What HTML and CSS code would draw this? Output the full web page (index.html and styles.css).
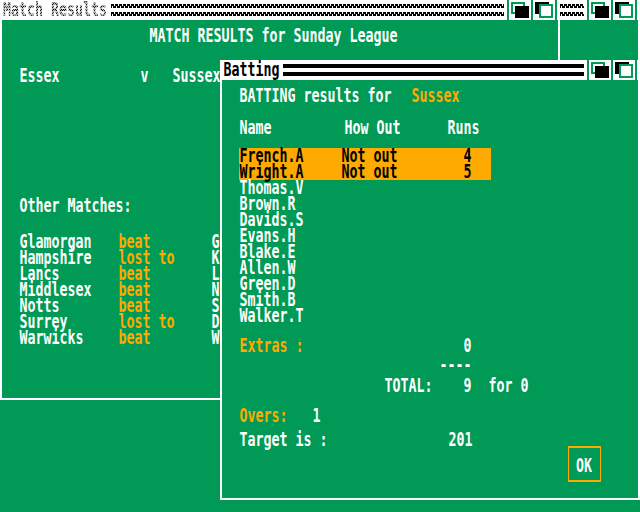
FILE: index.html
```html
<!DOCTYPE html>
<html lang="en">
<head>
<meta charset="utf-8">
<title>Match Results</title>
<link rel="stylesheet" href="styles.css">
</head>
<body>
<svg width="0" height="0" class="defs" aria-hidden="true">
  <symbol id="gadgets" viewBox="0 0 50 20">
    <path fill="#fff" d="M0 0h50v20H0z"/>
    <path fill="#095" d="M0 0h2v20H0zM24 0h2v20h-2zM48 0h2v20h-2z"/>
    <path fill="#095" fill-rule="evenodd" d="M4 2h14v12H4zM6 4v8h10V4z"/>
    <path fill="#000" d="M8 6h14v12H8zM28 2h14v12H28z"/>
    <path fill="#095" d="M32 4h14v14H32z"/>
    <path fill="#fff" d="M34 6h10v10H34z"/>
  </symbol>
</svg>
<main class="desktop">
  <section class="window side">
    <header class="bar"><i class="stripes wavy"></i><svg class="gadgets" width="50" height="20"><use href="#gadgets"/></svg></header>
  </section>

  <section class="window results">
    <header class="bar inactive"><h1>Match Results</h1><i class="stripes wavy"></i><svg class="gadgets" width="50" height="20"><use href="#gadgets"/></svg></header>
    <div class="body">
      <div class="row heading"><span>MATCH RESULTS for Sunday League</span></div>
      <div class="row fixture"><span>Essex</span><span>v</span><span>Sussex</span></div>
      <div class="row others"><span>Other Matches:</span></div>
      <div class="row match"><span>Glamorgan</span><span class="gold">beat</span><span>G</span></div>
      <div class="row match"><span>Hampshire</span><span class="gold">lost to</span><span>K</span></div>
      <div class="row match"><span>Lancs</span><span class="gold">beat</span><span>L</span></div>
      <div class="row match"><span>Middlesex</span><span class="gold">beat</span><span>N</span></div>
      <div class="row match"><span>Notts</span><span class="gold">beat</span><span>S</span></div>
      <div class="row match"><span>Surrey</span><span class="gold">lost to</span><span>D</span></div>
      <div class="row match"><span>Warwicks</span><span class="gold">beat</span><span>W</span></div>
    </div>
  </section>

  <section class="window batting">
    <header class="bar"><h1>Batting</h1><i class="stripes"></i><svg class="gadgets" width="50" height="20"><use href="#gadgets"/></svg></header>
    <div class="body">
      <div class="row team"><span>BATTING results for</span><span class="gold">Sussex</span></div>
      <div class="row columns"><span>Name</span><span>How Out</span><span>Runs</span></div>
      <div class="row player in"><span>French.A</span><span>Not out</span><span>4</span></div>
      <div class="row player in"><span>Wright.A</span><span>Not out</span><span>5</span></div>
      <div class="row player"><span>Thomas.V</span></div>
      <div class="row player"><span>Brown.R</span></div>
      <div class="row player"><span>Davids.S</span></div>
      <div class="row player"><span>Evans.H</span></div>
      <div class="row player"><span>Blake.E</span></div>
      <div class="row player"><span>Allen.W</span></div>
      <div class="row player"><span>Green.D</span></div>
      <div class="row player"><span>Smith.B</span></div>
      <div class="row player"><span>Walker.T</span></div>
      <div class="row extras"><span class="gold">Extras :</span><span>0</span></div>
      <div class="row rule"><span>----</span></div>
      <div class="row total"><span>TOTAL:</span><span>9</span><span>for 0</span></div>
      <div class="row overs"><span class="gold">Overs:</span><span>1</span></div>
      <div class="row target"><span>Target is :</span><span>201</span></div>
      <button class="ok"><span>OK</span></button>
    </div>
  </section>
</main>
</body>
</html>
```
FILE: styles.css
```css
* { box-sizing: border-box; margin: 0; padding: 0; }
body {
  width: 640px; height: 512px; overflow: hidden; background: #095;
  color: #fff; font: bold 13.29px/11px "DejaVu Sans Mono", monospace;
}
.defs { position: absolute; }
.desktop { position: relative; width: 640px; height: 512px; overflow: hidden; }
.gold { color: #fa0; }

/* Windows */
.window { position: absolute; border: solid #fff; border-width: 0 2px 2px; background: #095; }
.results { left: 0; top: 0; width: 560px; height: 400px; }
.side { left: 400px; top: 0; width: 240px; height: 400px; }
.batting { left: 220px; top: 60px; width: 420px; height: 440px; }

.bar { display: flex; height: 20px; background: #fff; color: #000; padding-left: 1px; }
.bar h1 {
  font: inherit; line-height: 14px; height: 14px; margin: 3px 4px 0 0;
  white-space: pre; transform: translateX(.5px) scaleY(1.44);
}
/* Ghosted title: letters filled with a checker of 1x2 pixel cells */
.inactive h1 {
  height: 20px; margin-top: 0; padding-top: 3px; transform: scaleY(1.44); transform-origin: 0 10px;
  color: transparent; background-clip: text; -webkit-background-clip: text;
  background-image: conic-gradient(#000 25%, #bbb 0 50%, #000 0 75%, #bbb 0);
  background-size: 2px 2px;
}
.stripes {
  flex: 1; height: 12px; margin: 4px 3px 0 0;
  background: linear-gradient(#000 0 4px, #fff 4px 8px, #000 8px 12px);
}
.wavy {
  background:
    repeating-linear-gradient(90deg, #000 0 3px, transparent 3px 4px) 0 0 / 100% 2px no-repeat,
    repeating-linear-gradient(90deg, #000 0 1px, transparent 1px 2px, #000 2px 4px) 0 2px / 100% 2px no-repeat,
    repeating-linear-gradient(90deg, #000 0 3px, transparent 3px 4px) 0 8px / 100% 2px no-repeat,
    repeating-linear-gradient(90deg, #000 0 1px, transparent 1px 2px, #000 2px 4px) 0 10px / 100% 2px no-repeat;
}
.side .bar { padding-left: 158px; }
.gadgets { flex: none; margin-right: 1px; }

/* Text rows */
.row { display: grid; height: 16px; white-space: pre; }
.row span { display: block; height: 11px; margin-top: 2px; transform: translate(.5px, .5px) scaleY(1.44); }

.results .body { padding: 8px 0 0 17px; }
.heading { padding-left: 130px; }
.fixture { margin-top: 24px; grid-template-columns: 121px 32px 1fr; }
.others { margin: 114px 0 20px; }
.match { grid-template-columns: 99px 93px 1fr; }

.batting .body { padding: 8px 0 0 17px; }
.team { grid-template-columns: 172px 1fr; }
.columns { margin: 16px 0 12px; grid-template-columns: 105px 103px 1fr; }
.player { width: 252px; grid-template-columns: 102px 122px 1fr; }
.in { background: #fa0; color: #000; }
.extras { margin-top: 14px; grid-template-columns: 224px 1fr; }
.rule { margin-top: 3px; padding-left: 200px; }
.total { margin-top: 5px; padding-left: 145px; grid-template-columns: 79px 25px 1fr; }
.overs { margin-top: 14px; grid-template-columns: 73px 1fr; }
.target { margin-top: 8px; grid-template-columns: 209px 1fr; }
.ok {
  display: block; width: 33px; height: 36px; margin: -2px 0 0 329px; text-align: center;
  border: solid #fa0; border-width: 2px 1px; background: none; color: inherit; font: inherit;
}
.ok span { display: block; height: 11px; margin-top: 2px; transform: translate(-.5px, .5px) scaleY(1.44); }
```
